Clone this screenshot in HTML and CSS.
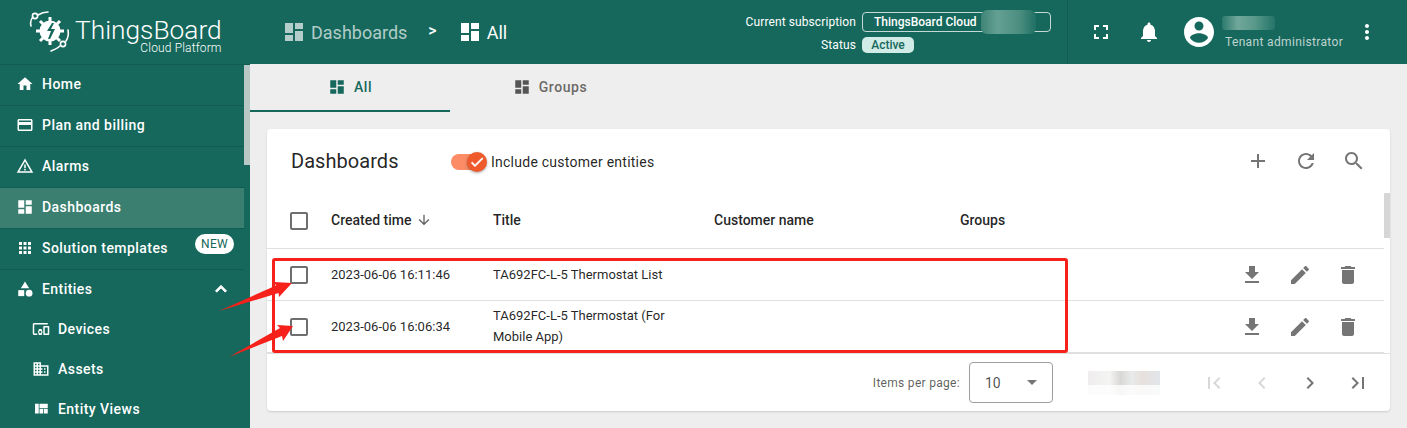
FILE: index.html
```html
<!DOCTYPE html>
<html lang="en">
<head>
  <meta charset="UTF-8">
  <title>ThingsBoard Dashboards</title>
  <link rel="stylesheet" href="styles.css">
</head>
<body>
  <svg class="icon-defs" xmlns="http://www.w3.org/2000/svg">
    <symbol id="i-home" viewBox="0 0 24 24"><path d="M10 20v-6h4v6h5v-8h3L12 3 2 12h3v8z"/></symbol>
    <symbol id="i-card" viewBox="0 0 24 24"><path d="M20 4H4c-1.11 0-1.99.89-1.99 2L2 18c0 1.11.89 2 2 2h16c1.11 0 2-.89 2-2V6c0-1.11-.89-2-2-2zm0 14H4v-6h16v6zm0-10H4V6h16v2z"/></symbol>
    <symbol id="i-warn" viewBox="0 0 24 24"><path d="M12 5.99L19.53 19H4.47L12 5.99M12 2L1 21h22L12 2zm1 14h-2v2h2v-2zm0-6h-2v5h2v-5z"/></symbol>
    <symbol id="i-dash" viewBox="0 0 24 24"><path d="M3 13h8V3H3v10zm0 8h8v-6H3v6zm10 0h8V11h-8v10zm0-18v6h8V3h-8z"/></symbol>
    <symbol id="i-grid" viewBox="0 0 24 24"><path d="M4 8h4V4H4v4zm6 12h4v-4h-4v4zm-6 0h4v-4H4v4zm0-6h4v-4H4v4zm6 0h4v-4h-4v4zm6-10v4h4V4h-4zm-6 4h4V4h-4v4zm6 6h4v-4h-4v4zm0 6h4v-4h-4v4z"/></symbol>
    <symbol id="i-category" viewBox="0 0 24 24"><path d="M12 2l-5.5 9h11z"/><circle cx="17.5" cy="17.5" r="4.5"/><path d="M3 13.5h8v8H3z"/></symbol>
    <symbol id="i-devices" viewBox="0 0 24 24"><path d="M3 6h18V4H3c-1.1 0-2 .9-2 2v12c0 1.1.9 2 2 2h4v-2H3V6zm10 6H9v1.78c-.61.55-1 1.33-1 2.22s.39 1.67 1 2.22V20h4v-1.78c.61-.55 1-1.34 1-2.22s-.39-1.67-1-2.22V12zm-2 5.5c-.83 0-1.5-.67-1.5-1.5s.67-1.5 1.5-1.5 1.5.67 1.5 1.5-.67 1.5-1.5 1.5zM22 8h-6c-.5 0-1 .5-1 1v10c0 .5.5 1 1 1h6c.5 0 1-.5 1-1V9c0-.5-.5-1-1-1zm-1 10h-4v-8h4v8z"/></symbol>
    <symbol id="i-domain" viewBox="0 0 24 24"><path d="M12 7V3H2v18h20V7H12zM6 19H4v-2h2v2zm0-4H4v-2h2v2zm0-4H4V9h2v2zm0-4H4V5h2v2zm4 12H8v-2h2v2zm0-4H8v-2h2v2zm0-4H8V9h2v2zm0-4H8V5h2v2zm10 12h-8v-2h2v-2h-2v-2h2v-2h-2V9h8v10zm-2-8h-2v2h2v-2zm0 4h-2v2h2v-2z"/></symbol>
    <symbol id="i-quilt" viewBox="0 0 24 24"><path d="M10 18h5v-6h-5v6zm-6 0h5V5H4v13zm12 0h5v-6h-5v6zM10 5v6h11V5H10z"/></symbol>
    <symbol id="i-less" viewBox="0 0 24 24"><path d="M12 8l-6 6 1.41 1.41L12 10.83l4.59 4.58L18 14z" stroke="currentColor" stroke-width="1"/></symbol>
    <symbol id="i-full" viewBox="0 0 24 24"><path d="M7 14H5v5h5v-2H7v-3zm-2-4h2V7h3V5H5v5zm12 7h-3v2h5v-5h-2v3zM14 5v2h3v3h2V5h-5z"/></symbol>
    <symbol id="i-bell" viewBox="0 0 24 24"><path d="M12 22c1.1 0 2-.9 2-2h-4c0 1.1.89 2 2 2zm6-6v-5c0-3.07-1.64-5.64-4.5-6.32V4c0-.83-.67-1.5-1.5-1.5s-1.5.67-1.5 1.5v.68C7.63 5.36 6 7.92 6 11v5l-2 2v1h16v-1l-2-2z"/></symbol>
    <symbol id="i-account" viewBox="0 0 24 24"><path d="M12 2C6.48 2 2 6.48 2 12s4.48 10 10 10 10-4.48 10-10S17.52 2 12 2zm0 3c1.66 0 3 1.34 3 3s-1.34 3-3 3-3-1.34-3-3 1.34-3 3-3zm0 14.2c-2.5 0-4.71-1.28-6-3.22.03-1.99 4-3.08 6-3.08 1.99 0 5.97 1.09 6 3.08-1.29 1.94-3.5 3.22-6 3.22z"/></symbol>
    <symbol id="i-more" viewBox="0 0 24 24"><path d="M12 8c1.1 0 2-.9 2-2s-.9-2-2-2-2 .9-2 2 .9 2 2 2zm0 2c-1.1 0-2 .9-2 2s.9 2 2 2 2-.9 2-2-.9-2-2-2zm0 6c-1.1 0-2 .9-2 2s.9 2 2 2 2-.9 2-2-.9-2-2-2z"/></symbol>
    <symbol id="i-add" viewBox="0 0 24 24"><path d="M19 13h-6v6h-2v-6H5v-2h6V5h2v6h6v2z"/></symbol>
    <symbol id="i-refresh" viewBox="0 0 24 24"><path d="M17.65 6.35C16.2 4.9 14.21 4 12 4c-4.42 0-7.99 3.58-7.99 8s3.57 8 7.99 8c3.73 0 6.84-2.55 7.73-6h-2.08c-.82 2.33-3.04 4-5.65 4-3.31 0-6-2.69-6-6s2.69-6 6-6c1.66 0 3.14.69 4.22 1.78L13 11h7V4l-2.35 2.35z"/></symbol>
    <symbol id="i-search" viewBox="0 0 24 24"><path d="M15.5 14h-.79l-.28-.27C15.41 12.59 16 11.11 16 9.5 16 5.91 13.09 3 9.5 3S3 5.91 3 9.5 5.91 16 9.5 16c1.61 0 3.09-.59 4.23-1.57l.27.28v.79l5 4.99L20.49 19l-4.99-5zm-6 0C7.01 14 5 11.99 5 9.5S7.01 5 9.5 5 14 7.01 14 9.5 11.99 14 9.5 14z"/></symbol>
    <symbol id="i-download" viewBox="0 0 24 24"><path d="M19 9h-4V3H9v6H5l7 7 7-7zM5 18v2h14v-2H5z"/></symbol>
    <symbol id="i-edit" viewBox="0 0 24 24"><path d="M3 17.25V21h3.75L17.81 9.94l-3.75-3.75L3 17.25zM20.71 7.04c.39-.39.39-1.02 0-1.41l-2.34-2.34c-.39-.39-1.02-.39-1.41 0l-1.83 1.83 3.75 3.75 1.83-1.83z"/></symbol>
    <symbol id="i-delete" viewBox="0 0 24 24"><path d="M6 19c0 1.1.9 2 2 2h8c1.1 0 2-.9 2-2V7H6v12zM19 4h-3.5l-1-1h-5l-1 1H5v2h14V4z"/></symbol>
    <symbol id="i-first" viewBox="0 0 24 24"><path d="M18.41 16.59L13.82 12l4.59-4.59L17 6l-6 6 6 6zM6 6h2v12H6z"/></symbol>
    <symbol id="i-prev" viewBox="0 0 24 24"><path d="M15.41 7.41L14 6l-6 6 6 6 1.41-1.41L10.83 12z"/></symbol>
    <symbol id="i-next" viewBox="0 0 24 24"><path d="M10 6L8.59 7.41 13.17 12l-4.58 4.59L10 18l6-6z"/></symbol>
    <symbol id="i-last" viewBox="0 0 24 24"><path d="M5.59 7.41L10.18 12l-4.59 4.59L7 18l6-6-6-6zM16 6h2v12h-2z"/></symbol>
    <symbol id="i-down" viewBox="0 0 24 24"><path d="M20 12l-1.41-1.41L13 16.17V4h-2v12.17l-5.58-5.58L4 12l8 8 8-8z"/></symbol>
    <symbol id="i-check" viewBox="0 0 24 24"><path d="M9 16.17L4.83 12l-1.42 1.41L9 19 21 7l-1.41-1.41z" stroke="currentColor" stroke-width="1"/></symbol>
  </svg>

  <div class="page">
    <aside class="sidebar">
      <div class="logo">
        <svg class="logo-mark" viewBox="0 0 42 42" width="42" height="42">
          <g fill="none" stroke="#fff" stroke-width="1.6" stroke-linecap="round">
            <path d="M2 15C1 11 2 8 4 6"/>
            <path d="M9 4C12 2 15 1 19 1"/>
            <path d="M39 19C40 24 39 27 37 30"/>
            <path d="M31 35C28 38 25 39 22 40"/>
            <circle cx="6" cy="5" r="2.6"/>
            <circle cx="34" cy="33" r="2.6"/>
          </g>
          <path d="M21 6V34M7 20H35M11 10L31 30M31 10L11 30" stroke="#fff" stroke-width="3"/>
          <circle cx="21" cy="20" r="10.5" fill="#fff"/>
          <path d="M23 12l-5 8h4l-3 8 2 0 5-10h-4l3-6z" fill="#15685b"/>
        </svg>
        <div class="logo-text">
          <span class="logo-name">ThingsBoard</span>
          <span class="logo-sub">Cloud Platform</span>
        </div>
      </div>
      <div class="nav-wrap">
        <nav class="nav">
          <a class="nav-item"><svg class="ic"><use href="#i-home"/></svg>Home</a>
          <a class="nav-item"><svg class="ic"><use href="#i-card"/></svg>Plan and billing</a>
          <a class="nav-item"><svg class="ic"><use href="#i-warn"/></svg>Alarms</a>
          <a class="nav-item active"><svg class="ic"><use href="#i-dash"/></svg>Dashboards</a>
          <a class="nav-item"><svg class="ic"><use href="#i-grid"/></svg>Solution templates<span class="badge-new">NEW</span></a>
          <a class="nav-item open"><svg class="ic"><use href="#i-category"/></svg>Entities<svg class="ic ic-less"><use href="#i-less"/></svg></a>
          <a class="nav-sub"><svg class="ic"><use href="#i-devices"/></svg>Devices</a>
          <a class="nav-sub"><svg class="ic"><use href="#i-domain"/></svg>Assets</a>
          <a class="nav-sub"><svg class="ic"><use href="#i-quilt"/></svg>Entity Views</a>
        </nav>
        <div class="nav-scroll"><div class="nav-thumb"></div></div>
      </div>
    </aside>

    <div class="content">
      <header class="toolbar">
        <div class="crumbs">
          <span class="crumb muted"><svg class="ic-crumb"><use href="#i-dash"/></svg>Dashboards</span>
          <span class="crumb-sep">&gt;</span>
          <span class="crumb"><svg class="ic-crumb"><use href="#i-dash"/></svg>All</span>
        </div>
        <div class="subscription">
          <div class="sub-row">
            <span class="sub-label">Current subscription</span>
            <span class="plan-chip">ThingsBoard Cloud<span class="plan-blur"></span></span>
          </div>
          <div class="sub-row">
            <span class="sub-label">Status</span>
            <span class="status-slot"><span class="status-chip">Active</span></span>
          </div>
        </div>
        <div class="user-area">
          <button class="tb-btn"><svg class="ic-24"><use href="#i-full"/></svg></button>
          <button class="tb-btn"><svg class="ic-24"><use href="#i-bell"/></svg></button>
          <svg class="ic-avatar"><use href="#i-account"/></svg>
          <div class="user-text">
            <span class="user-blur"></span>
            <span class="user-role">Tenant administrator</span>
          </div>
          <button class="tb-btn"><svg class="ic-24"><use href="#i-more"/></svg></button>
        </div>
      </header>

      <main class="main">
        <div class="tabs">
          <div class="tab selected"><svg class="ic-tab"><use href="#i-dash"/></svg>All</div>
          <div class="tab"><svg class="ic-tab"><use href="#i-dash"/></svg>Groups</div>
        </div>

        <section class="card">
          <div class="card-head">
            <h2 class="card-title">Dashboards</h2>
            <div class="toggle">
              <span class="toggle-track"></span>
              <span class="toggle-thumb"><svg><use href="#i-check"/></svg></span>
            </div>
            <span class="toggle-label">Include customer entities</span>
            <div class="head-actions">
              <button class="act-btn"><svg class="ic-24"><use href="#i-add"/></svg></button>
              <button class="act-btn"><svg class="ic-24"><use href="#i-refresh"/></svg></button>
              <button class="act-btn"><svg class="ic-24"><use href="#i-search"/></svg></button>
            </div>
          </div>

          <div class="table-wrap">
            <div class="table">
              <div class="row row-head">
                <span class="cb"></span>
                <span class="cell-sort">Created time<svg class="ic-sort"><use href="#i-down"/></svg></span>
                <span>Title</span>
                <span>Customer name</span>
                <span>Groups</span>
                <span></span>
              </div>
              <div class="row">
                <span class="cb"></span>
                <span>2023-06-06 16:11:46</span>
                <span class="cell-title">TA692FC-L-5 Thermostat List</span>
                <span></span>
                <span></span>
                <div class="row-actions">
                  <button class="act-btn"><svg class="ic-24"><use href="#i-download"/></svg></button>
                  <button class="act-btn"><svg class="ic-24"><use href="#i-edit"/></svg></button>
                  <button class="act-btn"><svg class="ic-24"><use href="#i-delete"/></svg></button>
                </div>
              </div>
              <div class="row">
                <span class="cb"></span>
                <span>2023-06-06 16:06:34</span>
                <span class="cell-title">TA692FC-L-5 Thermostat (For Mobile App)</span>
                <span></span>
                <span></span>
                <div class="row-actions">
                  <button class="act-btn"><svg class="ic-24"><use href="#i-download"/></svg></button>
                  <button class="act-btn"><svg class="ic-24"><use href="#i-edit"/></svg></button>
                  <button class="act-btn"><svg class="ic-24"><use href="#i-delete"/></svg></button>
                </div>
              </div>
            </div>
            <div class="table-scroll"></div>
          </div>

          <div class="pager">
            <span class="pager-label">Items per page:</span>
            <div class="pager-select"><span>10</span><span class="caret"></span></div>
            <span class="pager-blur"></span>
            <button class="act-btn off"><svg class="ic-24"><use href="#i-first"/></svg></button>
            <button class="act-btn off"><svg class="ic-24"><use href="#i-prev"/></svg></button>
            <button class="act-btn"><svg class="ic-24"><use href="#i-next"/></svg></button>
            <button class="act-btn"><svg class="ic-24"><use href="#i-last"/></svg></button>
          </div>
        </section>
      </main>
    </div>

    <!-- red markup drawn on top of the screenshot -->
    <div class="mark-box"></div>
    <svg class="mark-arrows" viewBox="0 0 1407 428" width="1407" height="428">
      <polygon points="219,311 276,285.5 274,282 292,283 279,297 278.5,293"/>
      <polygon points="229,357 280,328 277,325 293,326 283,341 282,336"/>
    </svg>
  </div>
</body>
</html>
```

FILE: styles.css
```css
* {
  box-sizing: border-box;
}

body {
  margin: 0;
  height: 428px;
  overflow: hidden;
  font-family: Roboto, "Liberation Sans", sans-serif;
  color: rgba(0, 0, 0, 0.87);
  background: #eee;
}

button {
  border: 0;
  padding: 0;
  background: none;
  color: inherit;
  display: flex;
  align-items: center;
  justify-content: center;
}

svg {
  fill: currentColor;
  flex: none;
}

.icon-defs {
  display: none;
}

.page {
  position: relative;
  display: flex;
  height: 428px;
  overflow: hidden;
}

/* Sidebar */
.sidebar {
  width: 250px;
  flex: none;
  background: #15685b;
  color: #fff;
  display: flex;
  flex-direction: column;
}

.logo {
  height: 65px;
  flex: none;
  display: flex;
  padding: 11px 0 0 29px;
  gap: 4px;
  border-bottom: 1px solid #115c50;
}

.logo-text {
  display: flex;
  flex-direction: column;
  align-items: flex-end;
}

.logo-name {
  font-size: 26.3px;
  font-weight: 300;
  line-height: 26px;
  margin-top: 6px;
}

.logo-sub {
  font-size: 12px;
  font-weight: 300;
  line-height: 10px;
  letter-spacing: 0.15px;
}

.nav-wrap {
  display: flex;
  flex: 1;
  min-height: 0;
}

.nav {
  width: 244px;
  flex: none;
}

.nav-item,
.nav-sub {
  display: flex;
  align-items: center;
  font-size: 14px;
  font-weight: 500;
  letter-spacing: 0.45px;
  color: #fff;
  padding-bottom: 2px;
}

.nav-item {
  height: 41px;
  padding-left: 16px;
  padding-right: 16px;
  border-bottom: 1px solid #115c50;
}

.nav-item.active {
  background: #3b7f71;
}

.nav-item.open {
  border-bottom: 0;
  height: 40px;
}

.nav-sub {
  height: 40px;
  padding-left: 32px;
}

.ic {
  width: 18px;
  height: 18px;
  margin-right: 8px;
}

.ic-less {
  margin: 0 -4px 0 auto;
  width: 22px;
  height: 22px;
}

.badge-new {
  margin: 0 -6px 8px auto;
  width: 39px;
  height: 20px;
  border-radius: 10px;
  background: #fff;
  color: #15685b;
  font-size: 12px;
  font-weight: 400;
  letter-spacing: 0.25px;
  line-height: 20px;
  text-align: center;
}

.nav-scroll {
  width: 6px;
  flex: none;
}

.nav-thumb {
  height: 100px;
  background: #b9c8c4;
}

/* Right side */
.content {
  flex: 1;
  min-width: 0;
  display: flex;
  flex-direction: column;
}

.toolbar {
  height: 64px;
  flex: none;
  background: #15685b;
  color: #fff;
  display: flex;
  align-items: center;
}

.crumbs {
  display: flex;
  align-items: center;
  padding-left: 32px;
  font-size: 18px;
}

.crumb {
  display: flex;
  align-items: center;
  gap: 5px;
}

.crumb.muted {
  color: rgba(255, 255, 255, 0.68);
}

.crumb-sep {
  margin: -4px 21px 0 21px;
  font-size: 16px;
  font-weight: 500;
}

.ic-crumb {
  width: 24px;
  height: 24px;
}

.subscription {
  margin-left: auto;
  display: flex;
  flex-direction: column;
  gap: 5px;
  padding-right: 16px;
  font-size: 12px;
}

.sub-row {
  display: flex;
  justify-content: flex-end;
  align-items: center;
  gap: 6px;
  width: 306px;
}

.sub-label {
  flex: 1;
  text-align: right;
  white-space: nowrap;
  letter-spacing: 0.1px;
}

.plan-chip {
  width: 189px;
  height: 20px;
  flex: none;
  border: 1px solid rgba(255, 255, 255, 0.75);
  border-radius: 4px;
  padding-left: 11px;
  display: flex;
  align-items: center;
  font-weight: 500;
}

.plan-blur {
  width: 55px;
  height: 24px;
  flex: none;
  margin-left: 4px;
  border-radius: 6px;
  background: linear-gradient(90deg, #3d8476, #64a093 30%, #4b8e80 70%, #1f7064);
}

.status-slot {
  width: 189px;
  flex: none;
  display: flex;
}

.status-chip {
  width: 52px;
  height: 16px;
  background: #d1ece6;
  border-radius: 5px;
  color: #15685b;
  font-weight: 500;
  line-height: 16px;
  text-align: center;
}

.user-area {
  width: 340px;
  height: 64px;
  flex: none;
  border-left: 1px solid #115c50;
  display: flex;
  align-items: center;
  padding-left: 9px;
}

.tb-btn {
  width: 48px;
  height: 48px;
}

.ic-24 {
  width: 24px;
  height: 24px;
}

.ic-avatar {
  width: 36px;
  height: 36px;
  margin-left: 8px;
}

.user-text {
  width: 118px;
  margin-left: 8px;
  display: flex;
  flex-direction: column;
  gap: 5px;
}

.user-blur {
  width: 53px;
  height: 14px;
  margin-left: -3px;
  background: linear-gradient(90deg, #2b7a6c, #71a79b 30%, #5a9a8b 60%, #25746a);
  border-radius: 3px;
}

.user-role {
  font-size: 12px;
  letter-spacing: 0.35px;
  white-space: nowrap;
  color: rgba(255, 255, 255, 0.72);
}

.main {
  flex: 1;
  min-height: 0;
  display: flex;
  flex-direction: column;
}

/* Tabs */
.tabs {
  display: flex;
  height: 48px;
  flex: none;
}

.tab {
  width: 200px;
  display: flex;
  align-items: center;
  justify-content: center;
  gap: 8px;
  font-size: 14px;
  font-weight: 500;
  letter-spacing: 0.6px;
  color: #6d6a68;
  border-bottom: 2px solid transparent;
}

.tab.selected {
  color: #15685b;
  border-bottom-color: #15685b;
}

.ic-tab {
  width: 18px;
  height: 18px;
  color: #555;
}

.tab.selected .ic-tab {
  color: #15685b;
}

/* Card */
.card {
  margin: 17px;
  height: 282px;
  background: #fff;
  border-radius: 4px;
  box-shadow: 0 1px 2px rgba(0, 0, 0, 0.15);
  display: flex;
  flex-direction: column;
}

.card-head {
  height: 64px;
  flex: none;
  display: flex;
  align-items: center;
  padding: 0 12px 0 24px;
}

.card-title {
  margin: 0;
  width: 160px;
  font-size: 20px;
  font-weight: 400;
  letter-spacing: 0.05px;
}

.toggle {
  position: relative;
  width: 40px;
  height: 24px;
  margin-top: 2px;
  display: flex;
  align-items: center;
}

.toggle-track {
  width: 35px;
  height: 16px;
  border-radius: 8px;
  background: #fb8c66;
}

.toggle-thumb {
  position: absolute;
  left: 16px;
  top: 2px;
  width: 20px;
  height: 20px;
  border-radius: 50%;
  background: #ee5a2c;
  color: #fff;
  box-shadow: 0 1px 3px rgba(0, 0, 0, 0.35);
  display: flex;
  align-items: center;
  justify-content: center;
}

.toggle-thumb svg {
  width: 16px;
  height: 16px;
}

.toggle-label {
  margin-top: 2px;
  font-size: 14px;
  letter-spacing: 0.25px;
}

.head-actions {
  margin-left: auto;
  display: flex;
}

.act-btn {
  width: 48px;
  height: 48px;
  color: #757575;
}

.act-btn.off {
  color: #d8d8d8;
}

.table-wrap {
  height: 161px;
  flex: none;
  display: flex;
  border-bottom: 1px solid #e0e0e0;
}

.table {
  flex: 1;
  min-width: 0;
}

.table-scroll {
  width: 6px;
  height: 45px;
  flex: none;
  background: #d6d6d6;
}

.row {
  height: 52px;
  display: grid;
  grid-template-columns: 64px 162px 221px 246px 268px 144px;
  align-items: center;
  border-bottom: 1px solid #e0e0e0;
  font-size: 13px;
}

.row-head {
  height: 56px;
  padding-bottom: 2px;
  font-size: 14px;
  font-weight: 500;
}

.cb {
  width: 18px;
  height: 18px;
  margin-left: 23px;
  border: 2px solid #6f6f6f;
  border-radius: 2px;
}

.row-head .cb {
  margin-top: 2px;
}

.cell-sort {
  display: flex;
  align-items: center;
  gap: 5px;
}

.ic-sort {
  width: 16px;
  height: 16px;
  color: #616161;
}

.cell-title {
  max-width: 185px;
  line-height: 21px;
  margin-bottom: 1px;
}

.row-actions {
  display: flex;
}

/* Paginator */
.pager {
  flex: 1;
  display: flex;
  align-items: center;
  padding-right: 8px;
  justify-content: flex-end;
}

.pager-label {
  font-size: 12px;
  letter-spacing: 0.3px;
  color: rgba(0, 0, 0, 0.65);
  margin-right: 9px;
}

.pager-select {
  width: 84px;
  height: 41px;
  border: 1px solid #9e9e9e;
  border-radius: 4px;
  padding: 0 15px;
  display: flex;
  align-items: center;
  justify-content: space-between;
  font-size: 14px;
  color: rgba(0, 0, 0, 0.7);
}

.caret {
  width: 0;
  height: 0;
  border-left: 5px solid transparent;
  border-right: 5px solid transparent;
  border-top: 5px solid #757575;
}

.pager-blur {
  width: 72px;
  height: 24px;
  margin: 0 30px 0 35px;
  background:
    linear-gradient(to bottom, transparent 58%, rgba(255, 255, 255, 0.8) 58%),
    linear-gradient(90deg, #efeded, #f4f4f3 30%, #d9d8d6 45%, #e8ebea 60%, #e7e0dd 75%, #e2e6ea);
}

/* Red markup */
.mark-box {
  position: absolute;
  left: 272px;
  top: 258px;
  width: 796px;
  height: 95px;
  border: 3px solid #f5211a;
  border-radius: 3px;
}

.mark-arrows {
  position: absolute;
  left: 0;
  top: 0;
  fill: #f5211a;
  pointer-events: none;
}
```
